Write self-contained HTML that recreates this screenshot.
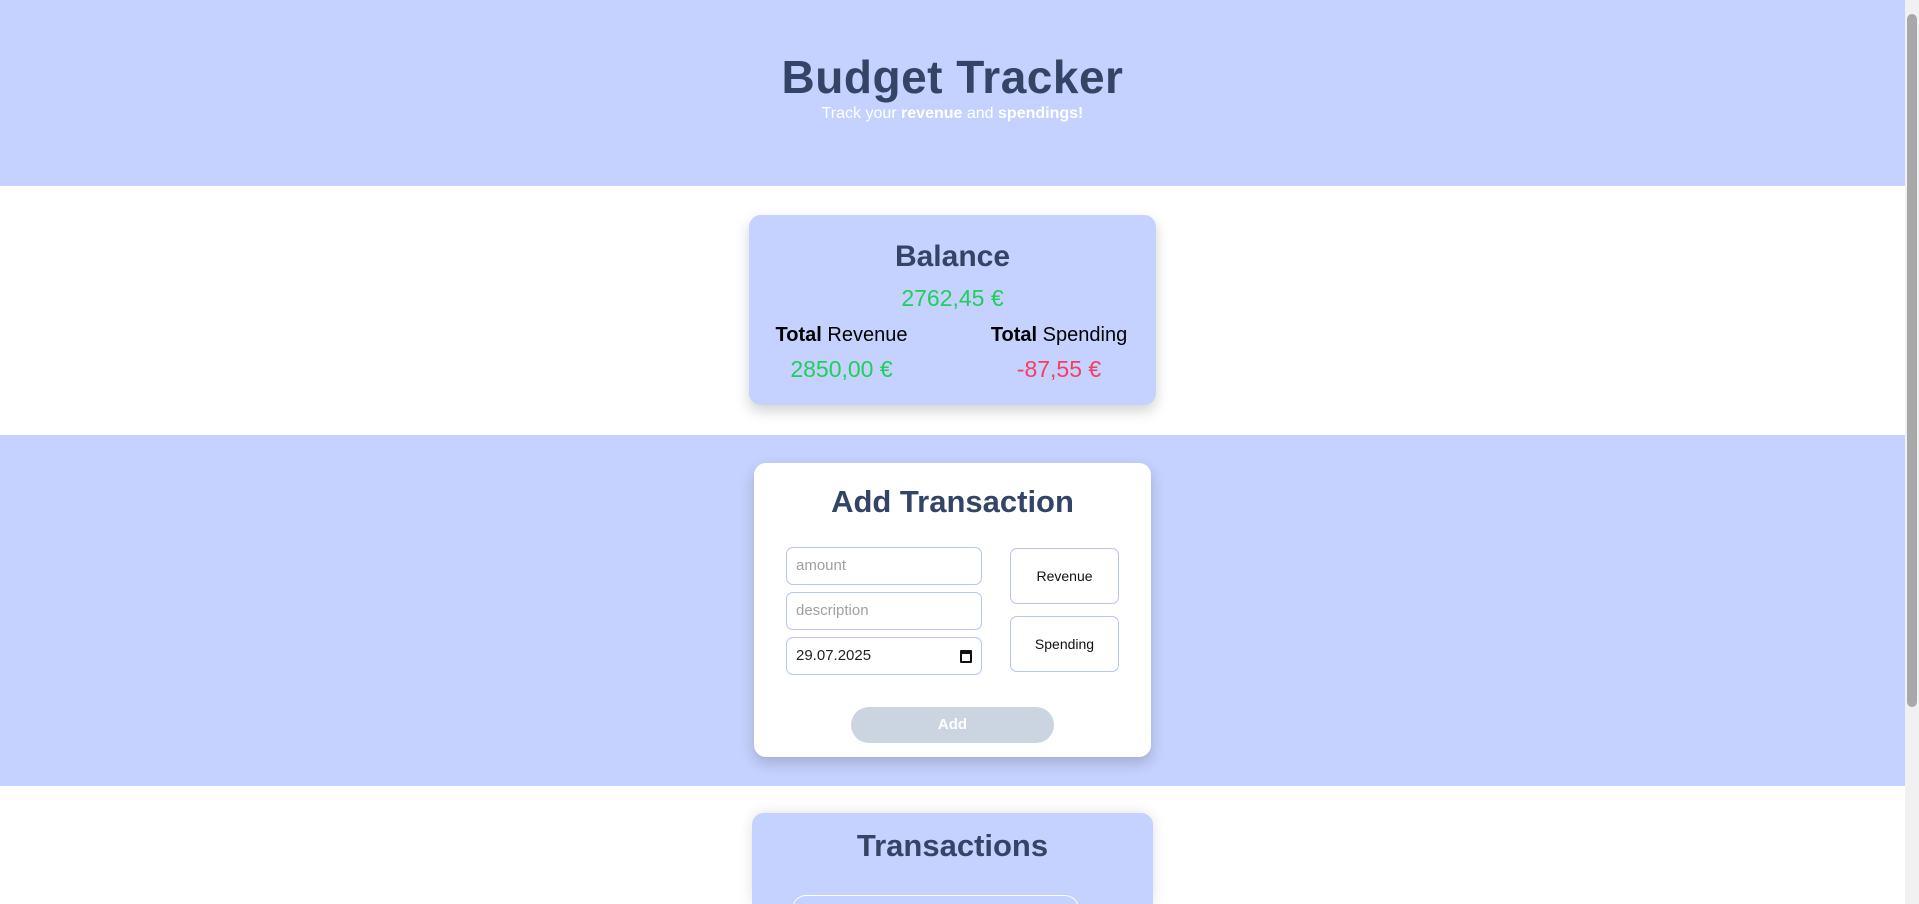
<!DOCTYPE html>
<html><head><meta charset="utf-8"><style>
*{box-sizing:border-box;margin:0;padding:0}
html,body{width:1919px;height:904px;overflow:hidden;background:#fff;font-family:"Liberation Sans",sans-serif;position:relative}
.abs{position:absolute}
.hdr{left:0;top:0;width:1905px;height:186px;background:#c5d1fe;text-align:center}
.hdr h1{position:absolute;left:0;right:0;top:50px;font-size:46px;color:#334466;font-weight:bold;letter-spacing:0.5px}
.hdr p{position:absolute;left:0;right:0;top:105px;font-size:16px;color:#fff}
.card{border-radius:12px;box-shadow:0 6px 14px rgba(0,0,0,0.18);text-align:center}
.c{position:absolute;left:0;right:0;text-align:center}
.inp{position:absolute;left:786px;width:196px;height:38px;border:1px solid #b5c2fc;border-radius:7px;background:#fff;font-size:15px;padding-left:9px;line-height:36px;color:#a0a0a0}
.btn{position:absolute;left:1010px;width:109px;height:56px;border:1px solid #b5c2fc;border-radius:7px;background:#fff;font-size:14px;color:#111;text-align:center;line-height:54px}
</style></head><body>
<div class="abs hdr"><h1>Budget Tracker</h1><p>Track your <b>revenue</b> and <b>spendings!</b></p></div>
<div class="abs" style="left:0;top:435px;width:1905px;height:351px;background:#c5d1fe"></div>
<div class="abs card" style="left:749px;top:215px;width:407px;height:190px;background:#c5d1fe">
 <div class="c" style="top:25px;font-size:30px;color:#334466;font-weight:bold">Balance</div>
 <div class="c" style="top:70px;font-size:23px;color:#1fcf5a">2762,45 €</div>
 <div class="abs" style="left:15px;top:109px;width:155px;text-align:center;font-size:20px;color:#000"><b>Total</b> Revenue</div>
 <div class="abs" style="left:15px;top:141px;width:155px;text-align:center;font-size:23px;color:#1fcf5a">2850,00 €</div>
 <div class="abs" style="left:225px;top:109px;width:170px;text-align:center;font-size:20px;color:#000"><b>Total</b> Spending</div>
 <div class="abs" style="left:225px;top:141px;width:170px;text-align:center;font-size:23px;color:#f43f5e">-87,55 €</div>
</div>
<div class="abs card" style="left:754px;top:463px;width:397px;height:294px;background:#fff">
 <div class="c" style="top:21px;font-size:31px;color:#334466;font-weight:bold">Add Transaction</div>
</div>
<div class="inp" style="top:547px">amount</div>
<div class="inp" style="top:592px">description</div>
<div class="inp" style="top:637px;color:#222">29.07.2025<span style="position:absolute;right:9px;top:12px;width:12px;height:13px;border:2px solid #111;border-top-width:4px;border-radius:1px"></span></div>
<div class="btn" style="top:548px">Revenue</div>
<div class="btn" style="top:616px">Spending</div>
<div class="abs" style="left:851px;top:707px;width:203px;height:36px;border-radius:18px;background:#cbd5e1;color:#fff;font-weight:bold;font-size:15px;text-align:center;line-height:36px">Add</div>
<div class="abs" style="left:752px;top:813px;width:401px;height:91px;background:#c5d1fe;border-radius:12px 12px 0 0;overflow:hidden;box-shadow:0 0 14px rgba(0,0,0,0.12)">
 <div class="c" style="top:15px;font-size:31px;color:#334466;font-weight:bold">Transactions</div>
 <div class="abs" style="left:40px;top:82px;width:287px;height:20px;border:1px solid #fff;border-bottom:none;border-radius:14px 14px 0 0"></div>
</div>
<div class="abs" style="left:1905px;top:0;width:14px;height:904px;background:#f1f1f1"></div>
<div class="abs" style="left:1907px;top:14px;width:10px;height:693px;background:#a8a8a8;border-radius:5px"></div>
</body></html>
